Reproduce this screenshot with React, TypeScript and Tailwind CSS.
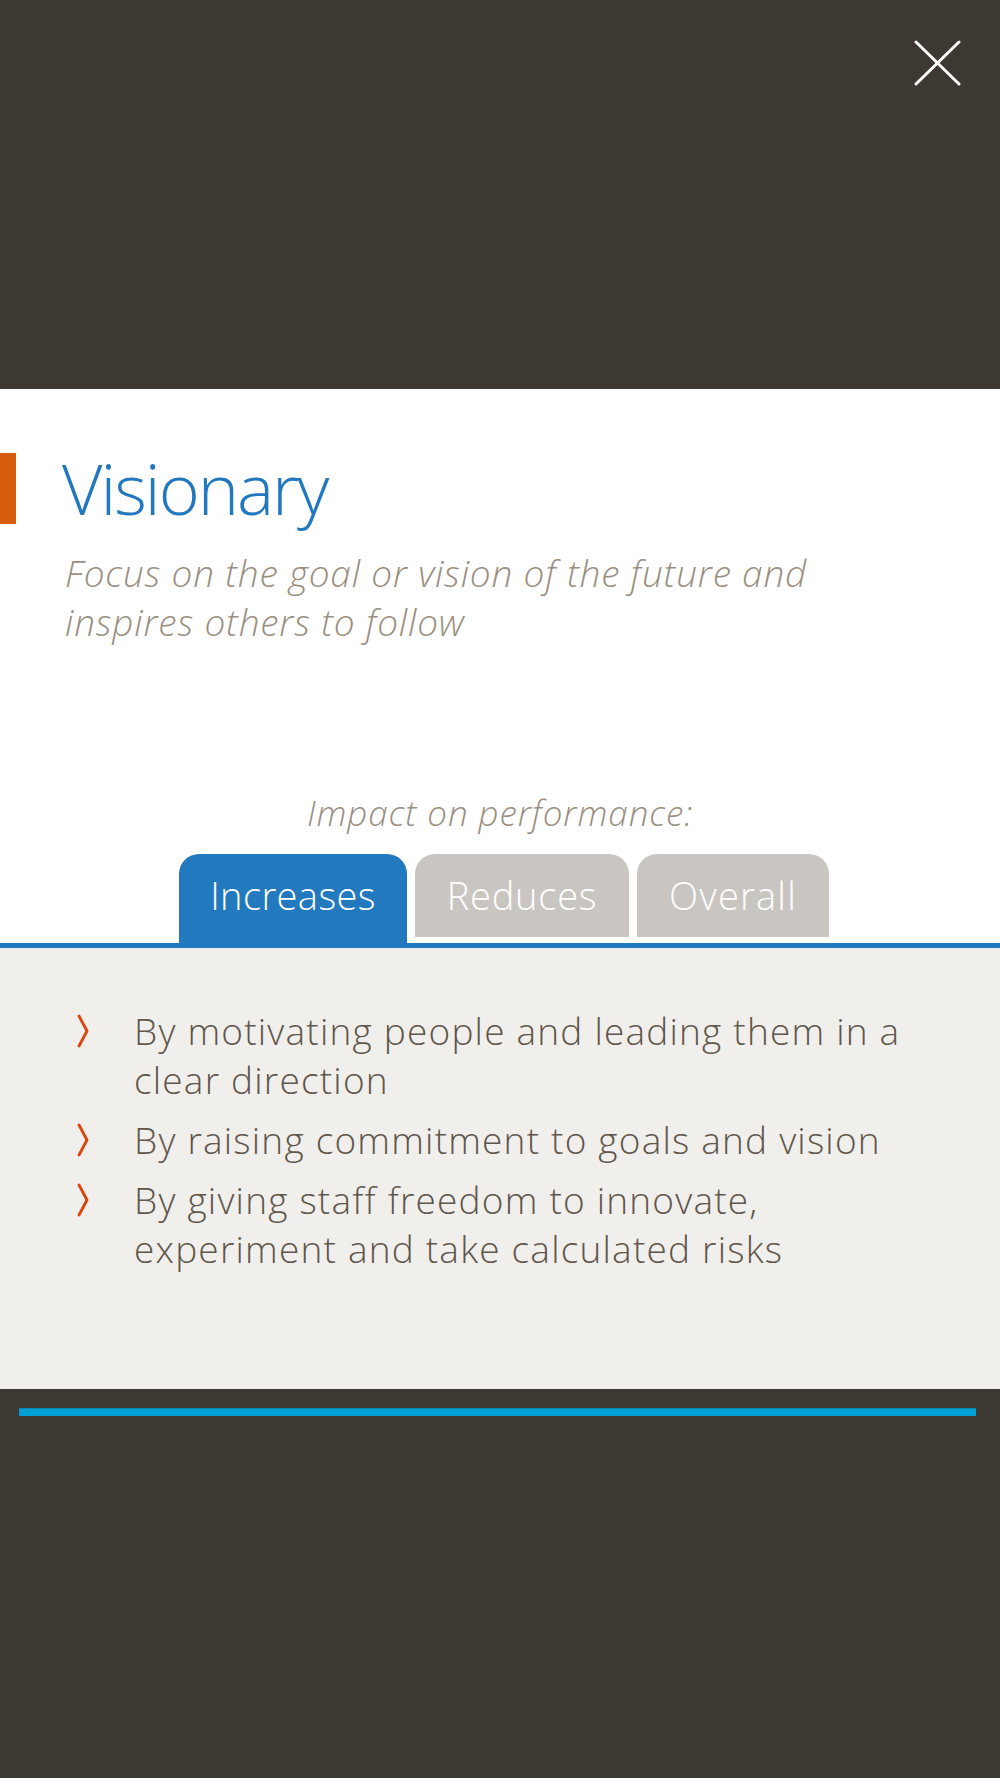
import React from "react";

const font = { fontFamily: '"Open Sans", "Liberation Sans", sans-serif' };

function Chevron() {
  return (
    <svg width="14" height="34" viewBox="0 0 14 34" className="shrink-0">
      <polyline points="3,2 11,17 3,32" fill="none" stroke="#d9450d" strokeWidth="2.8" strokeLinecap="round" strokeLinejoin="round" />
    </svg>
  );
}

const items: string[][] = [
  ["By motivating people and leading them in a", "clear direction"],
  ["By raising commitment to goals and vision"],
  ["By giving staff freedom to innovate,", "experiment and take calculated risks"],
];

export default function App() {
  return (
    <div className="w-[1000px] min-h-[1778px] bg-[#3d3832]" style={font}>
      {/* top dark header */}
      <div className="relative h-[389px]">
        <button className="absolute left-[914px] top-[40px] w-[48px] h-[48px]" aria-label="Close">
          <svg width="48" height="48" viewBox="0 0 48 48">
            <line x1="2" y1="2" x2="45" y2="44" stroke="#ffffff" strokeWidth="3" strokeLinecap="round" />
            <line x1="45" y1="2" x2="2" y2="44" stroke="#ffffff" strokeWidth="3" strokeLinecap="round" />
          </svg>
        </button>
      </div>

      {/* white section */}
      <div className="bg-white pt-[64px]">
        <div className="flex items-start">
          <div className="w-4 h-[71px] bg-[#d65c0e]" />
          <h1 className="ml-[46px] text-[70px] leading-[71px] font-light text-[#2278bf] tracking-[-2px]">Visionary</h1>
        </div>
        <p className="mt-[24px] ml-[65px] text-[37px] leading-[49px] italic font-light text-[#9a8f81] tracking-[0.8px]">
          Focus on the goal or vision of the future and
          <br />
          inspires others to follow
        </p>
        <p className="mt-[147px] text-center text-[35px] leading-[40px] italic font-light text-[#9a8f81] tracking-[0.9px]">
          Impact on performance:
        </p>
        <div className="mt-[21px] pl-[8px] flex justify-center items-end gap-2">
          <div className="w-[228px] h-[89px] pb-[6px] rounded-t-[20px] bg-[#2379bd] flex items-center justify-center text-white text-[38px] font-light tracking-[0.4px]">
            Increases
          </div>
          <div className="w-[214px] h-[83px] mb-[6px] rounded-t-[20px] bg-[#c9c6c1] flex items-center justify-center text-white text-[38px] font-light tracking-[0.8px]">
            Reduces
          </div>
          <div className="w-[192px] h-[83px] mb-[6px] rounded-t-[20px] bg-[#c9c6c1] flex items-center justify-center text-white text-[38px] font-light tracking-[1.2px]">
            Overall
          </div>
        </div>
      </div>

      {/* content panel */}
      <div className="border-t-[5px] border-[#2379bd] bg-[#f0efeb] h-[446px] pt-[58px] pl-[76px]">
        <ul className="flex flex-col gap-[11px]">
          {items.map((lines, i) => (
            <li key={i} className="flex items-start">
              <div className="h-[49px] flex items-center">
                <Chevron />
              </div>
              <div className="ml-[44px] text-[37px] leading-[49px] font-light text-[#5f564c] tracking-[1.2px]">
                {lines.map((l, j) => (
                  <React.Fragment key={j}>
                    {j > 0 && <br />}
                    {l}
                  </React.Fragment>
                ))}
              </div>
            </li>
          ))}
        </ul>
      </div>

      {/* bottom */}
      <div className="pt-[19px] pl-[19px] pr-[24px]">
        <div className="h-[8px] bg-[#00a0d4] border-t border-[#0b86b3]" />
      </div>
    </div>
  );
}
